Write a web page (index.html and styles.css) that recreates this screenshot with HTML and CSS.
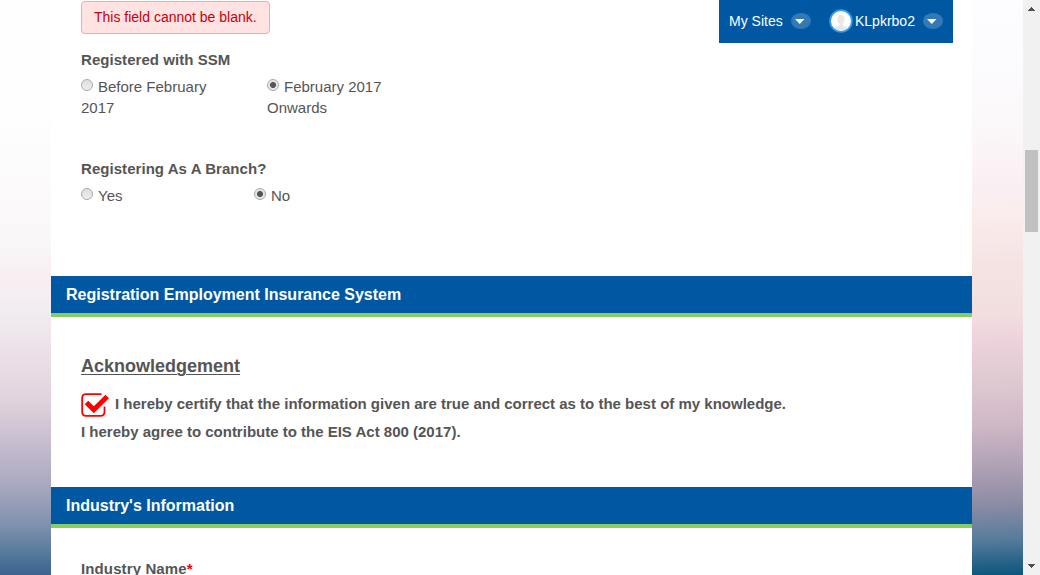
FILE: index.html
```html
<!DOCTYPE html>
<html lang="en">
<head>
<meta charset="utf-8">
<title>Employer Registration</title>
<link rel="stylesheet" href="styles.css">
</head>
<body>
<div class="page">
  <div class="backdrop backdrop-left"></div>
  <main class="content">
    <section class="panel company">
      <div class="error">This field cannot be blank.</div>
      <div class="label">Registered with SSM</div>
      <div class="options">
        <div class="option"><span class="radio"></span>Before February<br>2017</div>
        <div class="option"><span class="radio checked"></span>February 2017<br>Onwards</div>
      </div>
      <div class="label branch-label">Registering As A Branch?</div>
      <div class="options branch">
        <div class="option"><span class="radio"></span>Yes</div>
        <div class="option"><span class="radio checked"></span>No</div>
      </div>
    </section>
    <h2 class="bar">Registration Employment Insurance System</h2>
    <section class="panel acknowledgement">
      <h3 class="subtitle">Acknowledgement</h3>
      <div class="statement">
        <svg class="tick" width="28" height="26" viewBox="0 0 28 26">
          <path d="M20.500 2.200H5Q1.200 2.200 1.200 6V20Q1.200 23.800 5 23.800H19.500Q23.500 23.800 23.500 20V14.500" fill="none" stroke="#f00" stroke-width="1.800"/>
          <path d="M5.500 10.500L12.800 17.800L26.200 4.500" fill="none" stroke="#f00" stroke-width="5"/>
        </svg>
        <span class="certify">I hereby certify that the information given are true and correct as to the best of my knowledge.</span>
      </div>
      <div class="agree">I hereby agree to contribute to the EIS Act 800 (2017).</div>
    </section>
    <h2 class="bar">Industry's Information</h2>
    <section class="panel industry">
      <div class="label">Industry Name<span class="required">*</span></div>
    </section>
  </main>
  <div class="backdrop backdrop-right"></div>
  <div class="scrollbar">
    <svg class="arrow" width="7" height="4" viewBox="0 0 7 4" shape-rendering="crispEdges"><path d="M3 0h1v1h1v1h1v1h1v1H0V3h1V2h1V1h1z" fill="#505050"/></svg>
    <div class="thumb"></div>
    <svg class="arrow" width="7" height="4" viewBox="0 0 7 4" shape-rendering="crispEdges"><path d="M0 0h7v1H6v1H5v1H4v1H3V3H2V2H1V1H0z" fill="#505050"/></svg>
  </div>
  <nav class="userbar">
    <span class="sites">My Sites</span>
    <svg class="caret" width="20" height="16" viewBox="0 0 20 16"><ellipse cx="10" cy="8" rx="10" ry="8" fill="#3379b5"/><path d="M4 6h9.500l-4.750 5z" fill="#fff"/></svg>
    <svg class="avatar" width="24" height="24" viewBox="0 0 24 24"><circle cx="12" cy="12" r="10.900" fill="#fff" stroke="#3c9be5" stroke-width="1.800"/><path d="M12 5.700c-4.600 0-4.600 7-1.500 9v1.500L5 19q7 5 14 0l-5.500-2.800v-1.500c3.100-2 3.100-9-1.500-9z" fill="#e8e8e8"/></svg>
    <span class="user">KLpkrbo2</span>
    <svg class="caret" width="20" height="16" viewBox="0 0 20 16"><ellipse cx="10" cy="8" rx="10" ry="8" fill="#3379b5"/><path d="M4 6h9.500l-4.750 5z" fill="#fff"/></svg>
  </nav>
</div>
</body>
</html>
```

FILE: styles.css
```css
* { box-sizing: border-box; }
body {
  margin: 0;
  overflow: hidden;
  background: #fff;
  color: #555;
  font: 15px/21px "Liberation Sans", Arial, sans-serif;
}
.page {
  display: grid;
  grid-template-columns: 51px 921px 51px 17px;
  height: 575px;
  position: relative;
  overflow: hidden;
}
.backdrop-left {
  background: linear-gradient(180deg, #fefefe 0, #fefefe 120px, #fcfafb 180px, #faf7f8 245px, #f9eef2 275px, #f1edf1 312px, #eee2ea 345px, #e1d4de 397px, #c9bfd0 440px, #a9a8c0 485px, #7f91ad 525px, #5f80a0 547px, #3b638e 575px);
}
.backdrop-right {
  background: linear-gradient(178deg, #fdfcfe 0, #fbfafc 80px, #fcf8f9 125px, #fbf3f5 160px, #f8eef1 197px, #faeceb 218px, #f5e3e4 265px, #f2dedf 315px, #edd3db 340px, #dfc9d1 382px, #d0b8c7 425px, #ad9fb3 470px, #8c8ca5 505px, #577c9b 540px, #2a6389 562px, #09567b 577px);
}
.content { overflow: hidden; background: #fff; }
.panel { padding: 0 30px; }
.company { height: 276px; padding-top: 1px; }
.error {
  width: 189px;
  height: 33px;
  padding: 5px 12px;
  border: 1px solid #faa6a6;
  border-radius: 4px;
  background: #ffe2e2;
  color: #c8000a;
  font-size: 14px;
}
.label { font-weight: bold; letter-spacing: 0.05px; }
.error + .label { margin-top: 15px; }
.options { display: grid; grid-template-columns: 186px 186px; margin-top: 6px; }
.branch { grid-template-columns: 173px 173px; }
.branch-label { margin-top: 40px; }
.radio {
  display: inline-block;
  width: 12px;
  height: 12px;
  margin-right: 5px;
  border: 1px solid #aaa;
  border-radius: 50%;
  background: linear-gradient(#dedede, #eee);
  vertical-align: 1px;
}
.checked { background: radial-gradient(circle, #555 0, #555 2.600px, #e6e6e6 3.400px); }
.bar {
  height: 41px;
  margin: 0;
  padding: 0 15px;
  border-bottom: 4px solid #87cd61;
  background: #0058a3;
  color: #fff;
  font-size: 16px;
  line-height: 37px;
}
.acknowledgement { height: 170px; padding-top: 38px; font-weight: bold; }
.subtitle {
  margin: 0;
  font-size: 18px;
  line-height: 22px;
  text-decoration: underline;
  text-decoration-thickness: 1px;
  text-underline-offset: 2px;
}
.statement { display: flex; height: 28px; margin-top: 13px; }
.tick { margin-top: 2px; }
.certify { margin-left: 6px; line-height: 28px; }
.agree { margin-top: 3px; }
.industry { padding-top: 30px; }
.industry .label { letter-spacing: 0.12px; }
.required { color: #f00; }
.scrollbar {
  display: flex;
  flex-direction: column;
  align-items: center;
  padding: 7px 2px;
  background: #f1f1f1;
}
.thumb { width: 13px; height: 82px; margin: 139px 0 auto; background: #c1c1c1; }
.userbar {
  position: absolute;
  top: 0;
  left: 719px;
  display: flex;
  align-items: center;
  width: 234px;
  height: 43px;
  padding: 0 10px 1px;
  background: #0058a3;
  color: #fff;
  font-size: 14px;
}
.sites { width: 62px; }
.avatar { margin: 0 2px 0 18px; }
.user { width: 68px; }
```
